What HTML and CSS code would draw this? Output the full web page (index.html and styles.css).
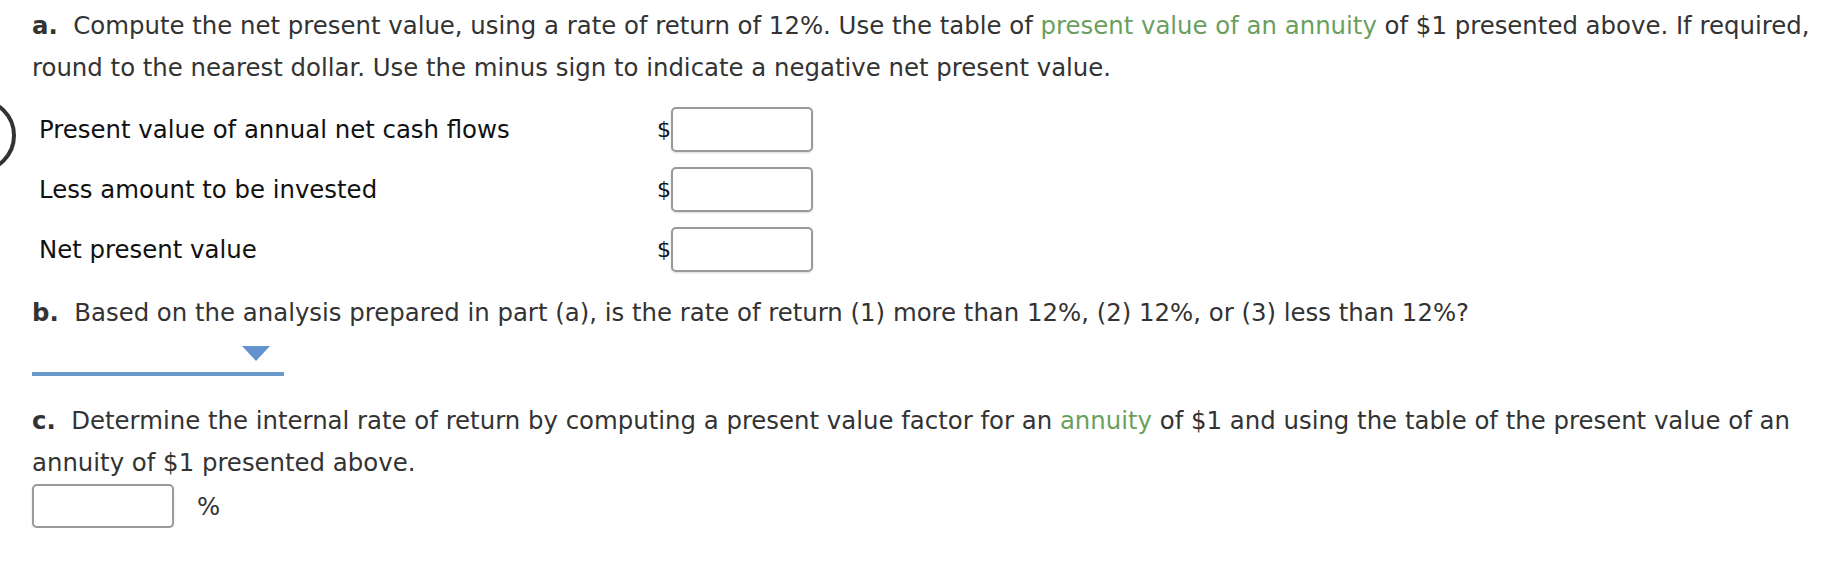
FILE: index.html
```html
<!DOCTYPE html>
<html>
<head>
<meta charset="utf-8">
<link rel="stylesheet" href="styles.css">
</head>
<body>
<div class="page">
  <div class="circle"></div>
  <p class="q q-a"><b>a.</b>&nbsp; Compute the net present value, using a rate of return of 12%. Use the table of <span class="link">present value of an annuity</span> of $1 presented above. If required, round to the nearest dollar. Use the minus sign to indicate a negative net present value.</p>
  <div class="rows">
    <div class="row"><span class="label">Present value of annual net cash flows</span><span class="cur">$</span><span class="box"></span></div>
    <div class="row"><span class="label">Less amount to be invested</span><span class="cur">$</span><span class="box"></span></div>
    <div class="row"><span class="label">Net present value</span><span class="cur">$</span><span class="box"></span></div>
  </div>
  <p class="q q-b"><b>b.</b>&nbsp; Based on the analysis prepared in part (a), is the rate of return (1) more than 12%, (2) 12%, or (3) less than 12%?</p>
  <div class="select"><span class="tri"></span></div>
  <p class="q q-c"><b>c.</b>&nbsp; Determine the internal rate of return by computing a present value factor for an <span class="link">annuity</span> of $1 and using the table of the present value of an annuity of $1 presented above.</p>
  <div class="pct"><span class="box box-c"></span><span class="pct-sign">%</span></div>
</div>
</body>
</html>
```
FILE: styles.css
```css
html, body {
  margin: 0;
  padding: 0;
  background: #fff;
}
body {
  font-family: "DejaVu Sans", Verdana, sans-serif;
  color: #333;
  font-size: 24.4px;
}
.page {
  position: relative;
  padding: 5px 12px 0 32px;
}
.circle {
  position: absolute;
  left: -59px;
  top: 98px;
  width: 67px;
  height: 67px;
  border: 4.5px solid #333;
  border-radius: 50%;
}
.q {
  margin: 0;
  line-height: 42px;
}
.q b {
  font-weight: bold;
}
.link {
  color: #6a9f5e;
}
.rows {
  margin-top: 18px;
  display: flex;
  flex-direction: column;
  gap: 15px;
}
.row {
  display: flex;
  align-items: center;
  height: 45px;
  padding-left: 7px;
}
.label {
  width: 618px;
  color: #111;
}
.cur {
  width: 14px;
  color: #111;
  font-size: 22px;
}
.box {
  display: block;
  width: 138px;
  height: 41px;
  border: 2px solid #9a9a9a;
  border-radius: 5px;
  box-shadow: 0 1px 2px rgba(0,0,0,0.15);
  background: #fff;
}
.q-b {
  margin-top: 20px;
}
.select {
  position: relative;
  width: 252px;
  height: 38px;
  border-bottom: 4px solid #6a98c8;
}
.tri {
  position: absolute;
  left: 210px;
  top: 12px;
  width: 0;
  height: 0;
  border-left: 14.5px solid transparent;
  border-right: 14.5px solid transparent;
  border-top: 15px solid #6393cc;
}
.q-c {
  margin-top: 24px;
}
.pct {
  display: flex;
  align-items: center;
  gap: 23px;
  margin-top: 0;
}
.box-c {
  width: 138px;
  height: 40px;
}
.pct-sign {
  color: #333;
}
```
